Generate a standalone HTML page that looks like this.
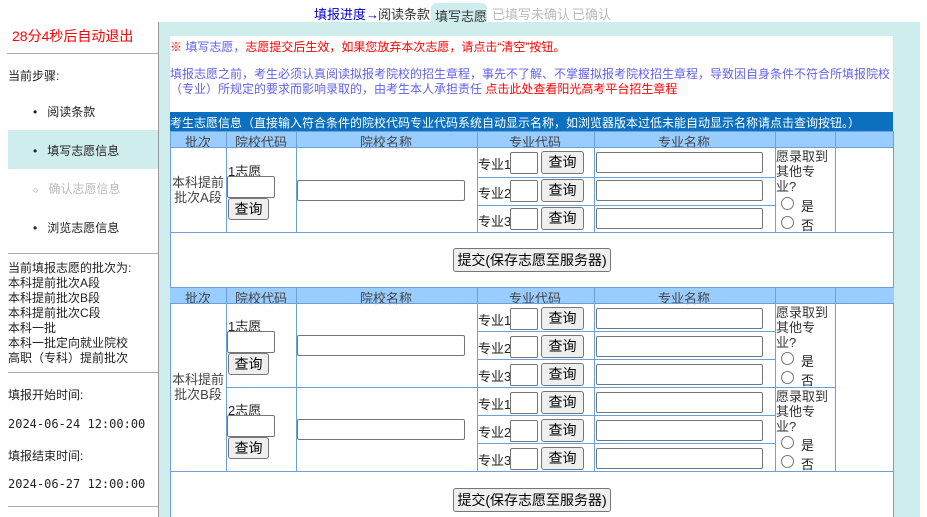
<!DOCTYPE html>
<html><head><meta charset="utf-8">
<style>
*{margin:0;padding:0;box-sizing:border-box}
body{width:927px;height:517px;overflow:hidden;background:#fff;position:relative;font-family:"Liberation Sans","Noto Sans CJK SC","WenQuanYi Zen Hei",sans-serif;font-size:13px;color:#222}
.a{position:absolute;white-space:nowrap}
.v{position:absolute;width:1px;background:#6f9fd8}
.h{position:absolute;height:1px;background:#6f9fd8}
.in{position:absolute;border:1px solid #767676;border-radius:2px;background:#fff}
.bt{position:absolute;border:1px solid #767676;border-radius:3px;background:#efefef;font-size:14px;text-align:center;color:#000}
.hd{position:absolute;background:#99ccff;height:16px;left:170px;width:724px}
.ht{position:absolute;font-size:13px;color:#444;transform:translateX(-50%)}
.rd{position:absolute;width:13px;height:13px;border:1px solid #767676;border-radius:50%;background:#fff}
.sl{position:absolute;height:1px;background:#aaa}
</style></head><body>
<!-- top tabs -->
<div class="a" style="left:431px;top:3px;width:56px;height:20px;background:#d0eded;border-radius:5px 5px 0 0"></div>
<div class="a" style="left:314px;top:4px;color:#0000cc">填报进度→</div>
<div class="a" style="left:378px;top:4px;color:#333">阅读条款</div>
<div class="a" style="left:435px;top:6px;color:#333">填写志愿</div>
<div class="a" style="left:492px;top:4px;color:#bbb">已填写未确认</div>
<div class="a" style="left:572px;top:4px;color:#bbb">已确认</div>
<!-- teal area -->
<div class="a" style="left:159px;top:22px;width:761px;height:495px;background:#d0eded"></div>
<div class="a" style="left:158px;top:22px;width:1px;height:495px;background:#999"></div>
<div class="a" style="left:170px;top:36px;width:723px;height:481px;background:#fff"></div>
<!-- sidebar -->
<div class="a" style="left:12px;top:26px;color:#f00;font-size:14px">28分4秒后自动退出</div>
<div class="sl" style="left:7px;top:53px;width:151px"></div>
<div class="a" style="left:8px;top:67px;font-size:12px">当前步骤:</div>
<div class="a" style="left:33px;top:103px;font-size:12px">•&nbsp;&nbsp;&nbsp;阅读条款</div>
<div class="a" style="left:8px;top:130px;width:150px;height:39px;background:#d0eded"></div>
<div class="a" style="left:33px;top:142px;font-size:12px">•&nbsp;&nbsp;&nbsp;填写志愿信息</div>
<div class="a" style="left:33px;top:180px;font-size:12px;color:#bbb"><span style="font-size:9px;color:#888">○</span>&nbsp;&nbsp;&nbsp;确认志愿信息</div>
<div class="a" style="left:33px;top:219px;font-size:12px">•&nbsp;&nbsp;&nbsp;浏览志愿信息</div>
<div class="sl" style="left:8px;top:253px;width:150px"></div>
<div class="a" style="left:8px;top:261px;font-size:12px;line-height:15px">当前填报志愿的批次为:<br>本科提前批次A段<br>本科提前批次B段<br>本科提前批次C段<br>本科一批<br>本科一批定向就业院校<br>高职（专科）提前批次</div>
<div class="sl" style="left:8px;top:372px;width:150px"></div>
<div class="a" style="left:8px;top:386px;font-size:12px">填报开始时间:</div>
<div class="a" style="left:8px;top:417px;font-family:'DejaVu Sans Mono','Liberation Mono',monospace;font-size:12px">2024-06-24 12:00:00</div>
<div class="a" style="left:8px;top:447px;font-size:12px">填报结束时间:</div>
<div class="a" style="left:8px;top:477px;font-family:'DejaVu Sans Mono','Liberation Mono',monospace;font-size:12px">2024-06-27 12:00:00</div>
<div class="sl" style="left:8px;top:506px;width:150px"></div>
<!-- notices -->
<div class="a" style="left:170px;top:38px;font-size:12px;color:#f00">※ <span style="color:#5f5ff0">填写志愿，</span>志愿提交后生效，如果您放弃本次志愿，请点击“清空”按钮。</div>
<div class="a" style="left:170px;top:67px;font-size:12px;line-height:15px;color:#6262ee">填报志愿之前，考生必须认真阅读拟报考院校的招生章程，事先不了解、不掌握拟报考院校招生章程，导致因自身条件不符合所填报院校<br>（专业）所规定的要求而影响录取的，由考生本人承担责任 <span style="color:#f00">点击此处查看阳光高考平台招生章程</span></div>
<div class="a" style="left:170px;top:112px;width:723px;height:19px;background:#0a70bf;color:#fff;padding:2px 0 0 0;font-size:12px;overflow:hidden">考生志愿信息（直接输入符合条件的院校代码专业代码系统自动显示名称，如浏览器版本过低未能自动显示名称请点击查询按钮。）</div>

<!-- Block A -->
<div class="hd" style="top:131px"></div>
<div class="ht" style="left:198px;top:132px">批次</div>
<div class="ht" style="left:261px;top:132px">院校代码</div>
<div class="ht" style="left:386px;top:132px">院校名称</div>
<div class="ht" style="left:535px;top:132px">专业代码</div>
<div class="ht" style="left:684px;top:132px">专业名称</div>
<div class="h" style="left:170px;top:131px;width:724px"></div>
<div class="h" style="left:170px;top:147px;width:724px"></div>
<div class="h" style="left:477px;top:177px;width:298px"></div>
<div class="h" style="left:477px;top:205px;width:298px"></div>
<div class="h" style="left:170px;top:232px;width:724px"></div>
<div class="h" style="left:170px;top:287px;width:724px;height:2px"></div>
<div class="v" style="left:170px;top:131px;height:386px"></div>
<div class="v" style="left:893px;top:131px;height:386px"></div>
<div class="v" style="left:226px;top:131px;height:101px"></div>
<div class="v" style="left:296px;top:131px;height:101px"></div>
<div class="v" style="left:477px;top:131px;height:101px"></div>
<div class="v" style="left:594px;top:131px;height:101px"></div>
<div class="v" style="left:775px;top:131px;height:101px"></div>
<div class="v" style="left:835px;top:131px;height:101px"></div>
<div class="a" style="left:170px;top:175px;width:56px;text-align:center;line-height:15px;color:#444">本科提前<br>批次A段</div>
<div class="a" style="left:228px;top:161px">1志愿</div>
<div class="in" style="left:227px;top:176px;width:48px;height:22px"></div>
<div class="bt" style="left:228px;top:198px;width:41px;height:22px;line-height:20px">查询</div>
<div class="in" style="left:297px;top:180px;width:168px;height:21px"></div>
<div class="a" style="left:478px;top:154px">专业1</div>
<div class="in" style="left:510px;top:152px;width:28px;height:22px"></div>
<div class="bt" style="left:541px;top:151px;width:43px;height:23px;line-height:21px">查询</div>
<div class="in" style="left:596px;top:152px;width:167px;height:21px"></div>
<div class="a" style="left:478px;top:183px">专业2</div>
<div class="in" style="left:510px;top:180px;width:28px;height:22px"></div>
<div class="bt" style="left:541px;top:179px;width:43px;height:23px;line-height:21px">查询</div>
<div class="in" style="left:596px;top:180px;width:167px;height:21px"></div>
<div class="a" style="left:478px;top:211px">专业3</div>
<div class="in" style="left:510px;top:208px;width:28px;height:22px"></div>
<div class="bt" style="left:541px;top:207px;width:43px;height:23px;line-height:21px">查询</div>
<div class="in" style="left:596px;top:208px;width:167px;height:21px"></div>
<div class="a" style="left:776px;top:149px;line-height:15px;color:#333">愿录取到<br>其他专<br>业?</div>
<div class="rd" style="left:781px;top:197px"></div><div class="a" style="left:801px;top:196px">是</div>
<div class="rd" style="left:781px;top:216px"></div><div class="a" style="left:801px;top:215px">否</div>
<div class="bt" style="left:453px;top:248px;width:158px;height:24px;line-height:22px">提交(保存志愿至服务器)</div>

<!-- Block B -->
<div class="hd" style="top:288px;height:15px"></div>
<div class="ht" style="left:198px;top:288px">批次</div>
<div class="ht" style="left:261px;top:288px">院校代码</div>
<div class="ht" style="left:386px;top:288px">院校名称</div>
<div class="ht" style="left:535px;top:288px">专业代码</div>
<div class="ht" style="left:684px;top:288px">专业名称</div>
<div class="h" style="left:170px;top:303px;width:724px"></div>
<div class="h" style="left:477px;top:331px;width:298px"></div>
<div class="h" style="left:477px;top:359px;width:298px"></div>
<div class="h" style="left:226px;top:387px;width:609px"></div>
<div class="h" style="left:477px;top:415px;width:298px"></div>
<div class="h" style="left:477px;top:443px;width:298px"></div>
<div class="h" style="left:170px;top:471px;width:724px"></div>
<div class="v" style="left:226px;top:287px;height:184px"></div>
<div class="v" style="left:296px;top:287px;height:184px"></div>
<div class="v" style="left:477px;top:287px;height:184px"></div>
<div class="v" style="left:594px;top:287px;height:184px"></div>
<div class="v" style="left:775px;top:287px;height:184px"></div>
<div class="v" style="left:835px;top:287px;height:184px"></div>
<div class="a" style="left:170px;top:372px;width:56px;text-align:center;line-height:15px;color:#444">本科提前<br>批次B段</div>

<div class="a" style="left:228px;top:316px">1志愿</div>
<div class="in" style="left:227px;top:331px;width:48px;height:22px"></div>
<div class="bt" style="left:228px;top:353px;width:41px;height:22px;line-height:20px">查询</div>
<div class="in" style="left:297px;top:335px;width:168px;height:21px"></div>
<div class="a" style="left:478px;top:310px">专业1</div>
<div class="in" style="left:510px;top:308px;width:28px;height:22px"></div>
<div class="bt" style="left:541px;top:307px;width:43px;height:23px;line-height:21px">查询</div>
<div class="in" style="left:596px;top:308px;width:167px;height:21px"></div>
<div class="a" style="left:478px;top:338px">专业2</div>
<div class="in" style="left:510px;top:336px;width:28px;height:22px"></div>
<div class="bt" style="left:541px;top:335px;width:43px;height:23px;line-height:21px">查询</div>
<div class="in" style="left:596px;top:336px;width:167px;height:21px"></div>
<div class="a" style="left:478px;top:366px">专业3</div>
<div class="in" style="left:510px;top:364px;width:28px;height:22px"></div>
<div class="bt" style="left:541px;top:363px;width:43px;height:23px;line-height:21px">查询</div>
<div class="in" style="left:596px;top:364px;width:167px;height:21px"></div>
<div class="a" style="left:776px;top:305px;line-height:15px;color:#333">愿录取到<br>其他专<br>业?</div>
<div class="rd" style="left:781px;top:352px"></div><div class="a" style="left:801px;top:351px">是</div>
<div class="rd" style="left:781px;top:371px"></div><div class="a" style="left:801px;top:370px">否</div>

<div class="a" style="left:228px;top:400px">2志愿</div>
<div class="in" style="left:227px;top:415px;width:48px;height:22px"></div>
<div class="bt" style="left:228px;top:437px;width:41px;height:22px;line-height:20px">查询</div>
<div class="in" style="left:297px;top:419px;width:168px;height:21px"></div>
<div class="a" style="left:478px;top:394px">专业1</div>
<div class="in" style="left:510px;top:392px;width:28px;height:22px"></div>
<div class="bt" style="left:541px;top:391px;width:43px;height:23px;line-height:21px">查询</div>
<div class="in" style="left:596px;top:392px;width:167px;height:21px"></div>
<div class="a" style="left:478px;top:422px">专业2</div>
<div class="in" style="left:510px;top:420px;width:28px;height:22px"></div>
<div class="bt" style="left:541px;top:419px;width:43px;height:23px;line-height:21px">查询</div>
<div class="in" style="left:596px;top:420px;width:167px;height:21px"></div>
<div class="a" style="left:478px;top:450px">专业3</div>
<div class="in" style="left:510px;top:448px;width:28px;height:22px"></div>
<div class="bt" style="left:541px;top:447px;width:43px;height:23px;line-height:21px">查询</div>
<div class="in" style="left:596px;top:448px;width:167px;height:21px"></div>
<div class="a" style="left:776px;top:389px;line-height:15px;color:#333">愿录取到<br>其他专<br>业?</div>
<div class="rd" style="left:781px;top:436px"></div><div class="a" style="left:801px;top:435px">是</div>
<div class="rd" style="left:781px;top:455px"></div><div class="a" style="left:801px;top:454px">否</div>

<div class="bt" style="left:453px;top:488px;width:158px;height:24px;line-height:22px">提交(保存志愿至服务器)</div>
</body></html>
